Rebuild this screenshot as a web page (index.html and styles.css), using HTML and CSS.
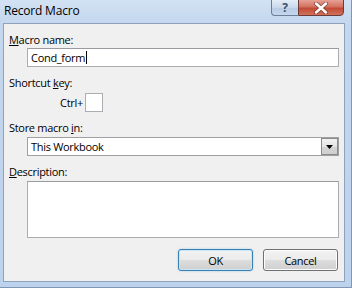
FILE: index.html
```html
<!DOCTYPE html>
<html>
<head>
<meta charset="utf-8">
<link rel="stylesheet" href="styles.css">
</head>
<body>
<div class="window">
  <div class="titlebar">
    <span class="title">Record Macro</span>
    <div class="caption-buttons">
      <div class="cbtn help"><span>?</span></div>
      <div class="cbtn close">
        <svg width="16" height="12" viewBox="0 0 16 12"><path d="M3 1.5 L13 10.5 M13 1.5 L3 10.5" stroke="#5a2020" stroke-width="4.2" stroke-linecap="round" opacity="0.55"/><path d="M3 1.5 L13 10.5 M13 1.5 L3 10.5" stroke="#ffffff" stroke-width="2.4" stroke-linecap="round"/></svg>
      </div>
    </div>
  </div>
  <div class="client">
    <div class="label first"><u>M</u>acro name:</div>
    <div class="field text"><span>Cond_form</span><span class="caret"></span></div>
    <div class="label">Shortcut <u>k</u>ey:</div>
    <div class="shortcut"><span class="ctrl">Ctrl+</span><div class="keybox"></div></div>
    <div class="label">Store macro <u>i</u>n:</div>
    <div class="combo">
      <span>This Workbook</span>
      <div class="drop"><svg width="7" height="4" viewBox="0 0 7 4"><path d="M0 0 H7 L3.5 4 Z" fill="#000"/></svg></div>
    </div>
    <div class="label"><u>D</u>escription:</div>
    <div class="field area"></div>
    <div class="buttons">
      <div class="btn default">OK</div>
      <div class="btn">Cancel</div>
    </div>
  </div>
</div>
</body>
</html>
```

FILE: styles.css
```css
html, body {
  margin: 0;
  padding: 0;
}
body {
  width: 352px;
  height: 288px;
  overflow: hidden;
  font-family: "Open Sans", "Noto Sans", sans-serif;
  font-size: 11px;
  letter-spacing: -0.3px;
  color: #000;
}
.window {
  width: 352px;
  height: 288px;
  box-sizing: border-box;
  background: linear-gradient(180deg, #d3e2f3 0px, #c4d7ee 23px, #bdd2ec 100%);
  display: flex;
  flex-direction: column;
  border-right: 1px solid #7f97b2;
  border-bottom: 1px solid #7f97b2;
}
.titlebar {
  height: 23px;
  display: flex;
  align-items: flex-start;
  justify-content: space-between;
  flex: none;
}
.title {
  margin-left: 4px;
  margin-top: 3px;
  font-size: 12px;
  letter-spacing: -0.2px;
  line-height: 16px;
  color: #000;
}
.caption-buttons {
  display: flex;
  margin-right: 7px;
  margin-top: -1px;
}
.cbtn {
  height: 17px;
  box-sizing: border-box;
  display: flex;
  align-items: center;
  justify-content: center;
}
.help {
  width: 27px;
  border: 1px solid #6b7f98;
  border-right: none;
  border-radius: 0 0 0 4px;
  background: linear-gradient(180deg, #e4edf7 0%, #cad9ea 50%, #b7cbe2 51%, #c5d7ec 100%);
  color: #3d5371;
  font-weight: bold;
  font-size: 12px;
  line-height: 14px;
}
.close {
  width: 46px;
  border: 1px solid #6b3a3a;
  border-radius: 0 0 4px 0;
  background: linear-gradient(180deg, #e8a195 0%, #d2725f 45%, #c24a35 55%, #d1735a 100%);
}
.client {
  margin-left: 3px;
  width: 342px;
  height: 259px;
  box-sizing: border-box;
  border: 1px solid #8da2bb;
  background: #f0f0f0;
  display: flex;
  flex-direction: column;
  padding: 0 5px 0 0;
}
.label {
  margin-left: 5px;
  margin-top: 8px;
  line-height: 15px;
  height: 15px;
}
.label.first {
  margin-top: 8px;
}
.field {
  margin-left: 23px;
  box-sizing: border-box;
  background: #fff;
  border: 1px solid #abadb3;
  border-top-color: #999ba0;
}
.field.text {
  margin-top: 1px;
  height: 19px;
  display: flex;
  align-items: center;
  padding-left: 3px;
  line-height: 15px;
}
.caret {
  display: inline-block;
  width: 1px;
  height: 13px;
  background: #000;
  margin-left: 1px;
}
.shortcut {
  display: flex;
  align-items: center;
  margin-top: 3px;
  height: 19px;
}
.ctrl {
  width: 79px;
  text-align: right;
  margin-right: 2px;
}
.keybox {
  width: 18px;
  height: 19px;
  box-sizing: border-box;
  background: #fff;
  border: 1px solid #abadb3;
}
.combo {
  margin-left: 23px;
  margin-top: 2px;
  height: 19px;
  box-sizing: border-box;
  border: 1px solid #a0a0a0;
  background: #fff;
  display: flex;
  align-items: center;
  justify-content: space-between;
  padding-left: 3px;
}
.drop {
  width: 17px;
  height: 17px;
  box-sizing: border-box;
  border: 1px solid #8b8b8b;
  background: linear-gradient(180deg, #f2f2f2 0%, #e4e4e4 50%, #d4d4d4 51%, #cfcfcf 100%);
  display: flex;
  align-items: center;
  justify-content: center;
}
.field.area {
  margin-top: 2px;
  height: 57px;
}
.buttons {
  display: flex;
  justify-content: flex-end;
  gap: 10px;
  margin-top: 11px;
  margin-right: 1px;
}
.btn {
  width: 75px;
  height: 22px;
  box-sizing: border-box;
  border: 1px solid #707070;
  border-radius: 3px;
  background: linear-gradient(180deg, #f2f2f2 0%, #ebebeb 50%, #dddddd 51%, #cfcfcf 100%);
  box-shadow: inset 0 0 0 1px #fcfcfc;
  display: flex;
  align-items: center;
  justify-content: center;
  line-height: 15px;
}
.btn.default {
  border-color: #3c7fb1;
  box-shadow: inset 0 0 0 1px #c9e6f8, 0 0 2px #8fc4e8;
}
```
